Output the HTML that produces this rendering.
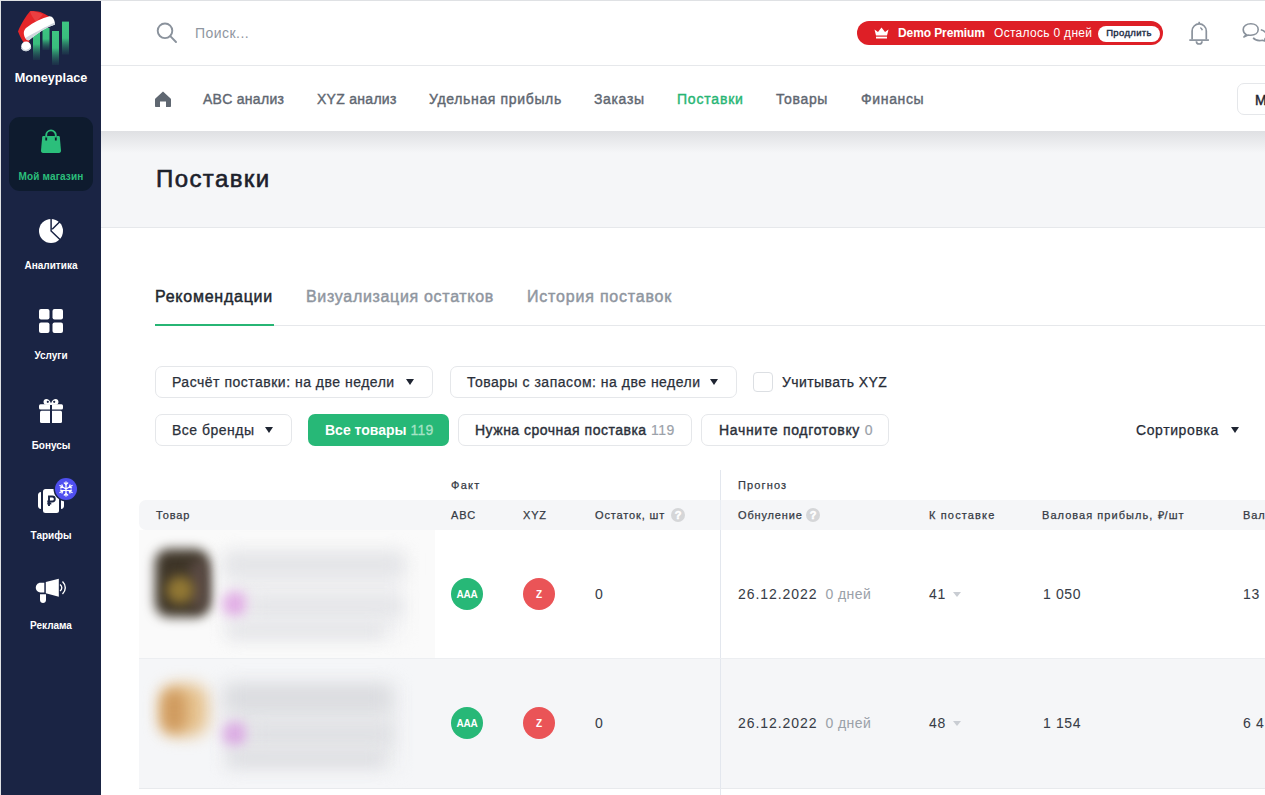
<!DOCTYPE html>
<html><head><meta charset="utf-8">
<style>
*{box-sizing:border-box;margin:0;padding:0}
html,body{width:1265px;height:795px;overflow:hidden;background:#fff;font-family:"Liberation Sans",sans-serif;color:#1f2532}
.abs{position:absolute}
#frame{position:absolute;left:0;top:0;width:1265px;height:795px;border-top:1px solid #dfe1e4;border-left:1px solid #dfe1e4}
#side{position:absolute;left:1px;top:1px;width:100px;height:794px;background:#1a2444}
.slabel{position:absolute;left:0;width:100px;text-align:center;font-size:10px;font-weight:700;color:#fff;white-space:nowrap}
#header{position:absolute;left:101px;top:1px;width:1164px;height:65px;background:#fff;border-bottom:1px solid #e6e8eb}
#nav{position:absolute;left:101px;top:66px;width:1164px;height:65px;background:#fff}
.nv{position:absolute;top:91px;font-size:14px;font-weight:400;color:#5f6771;white-space:nowrap;line-height:16px;letter-spacing:0.65px;-webkit-text-stroke:0.4px currentColor}
#titlebar{position:absolute;left:101px;top:131px;width:1164px;height:97px;background:#f5f6f8;border-bottom:1px solid #e6e8eb}
#shadow{position:absolute;left:101px;top:131px;width:1164px;height:22px;background:linear-gradient(#dfe0e3,#f5f6f8)}
.tab{position:absolute;top:288px;font-size:16px;font-weight:400;color:#8f969f;white-space:nowrap;line-height:18px;letter-spacing:0.72px;-webkit-text-stroke:0.45px currentColor}
.btn{position:absolute;height:32px;border:1px solid #e5e7ea;border-radius:7px;background:#fff;font-size:14px;color:#2b303a;white-space:nowrap;line-height:30px}
.reg{letter-spacing:0.5px;-webkit-text-stroke:0.25px currentColor}
.tri{position:absolute;width:0;height:0;border-left:4.5px solid transparent;border-right:4.5px solid transparent;border-top:6px solid #1f2532}
.cnt{color:#9ba1a9;font-weight:400}
.th{position:absolute;font-size:11px;font-weight:400;color:#353a44;letter-spacing:0.85px;white-space:nowrap;line-height:13px;-webkit-text-stroke:0.25px currentColor}
.help{position:absolute;width:14px;height:14px;border-radius:50%;background:#d5d6d8;color:#fff;font-size:11px;line-height:14.5px;text-align:center;letter-spacing:0;font-weight:700;-webkit-text-stroke:0.5px #fff}
.td{position:absolute;font-size:14px;color:#383d47;letter-spacing:0.6px;white-space:nowrap;line-height:16px;-webkit-text-stroke:0.05px currentColor}
.circ{position:absolute;width:32px;height:32px;border-radius:50%;color:#fff;font-size:10px;font-weight:700;text-align:center;line-height:33.5px;letter-spacing:-0.3px}
.blur{position:absolute;filter:blur(6px)}
</style></head><body>
<div id="frame"></div>

<!-- SIDEBAR -->
<div id="side"></div>
<!-- logo -->
<svg class="abs" style="left:14px;top:8px" width="64" height="62" viewBox="0 0 64 62">
<defs>
<linearGradient id="bg" x1="0" y1="0" x2="0" y2="1"><stop offset="0" stop-color="#3ec582"/><stop offset="0.5" stop-color="#39be7d"/><stop offset="1" stop-color="#2a6e62" stop-opacity="0.15"/></linearGradient>
</defs>
<rect x="19" y="20" width="7" height="32" fill="url(#bg)"/>
<rect x="28.5" y="20" width="7" height="22" fill="url(#bg)"/>
<rect x="38" y="23" width="7" height="34" fill="url(#bg)"/>
<rect x="48" y="13.6" width="7" height="33" fill="url(#bg)"/>
<!-- hat -->
<path d="M37 10 C31 5 23 2 16 3.3 C12 8 7 16 4 23.5 C6 29 8.5 33 11 36.5 L15.5 34 L14 21 Z" fill="#e52529"/>
<path d="M16 3.3 C20 3 25 4.5 29 6.5 L22 14 C19 10 17 7 16 3.3Z" fill="#f05a5a" opacity="0.5"/>
<path d="M12 20 C20 14 28 10 35.5 8.3 C38.5 8.2 40.8 11.5 41 16.5 C35 18.5 25 23.5 15 32.3 C12 32.5 10 29 9.8 25 C9.8 23 10.8 21 12 20 Z" fill="#fff"/>
<path d="M41 16.5 C35 18.5 25 23.5 15 32.3 C13.5 32.4 12.3 31.5 11.5 30 C20 25 32 18.5 40.8 14.5 Z" fill="#cfd6de"/>
<circle cx="12.1" cy="38.4" r="4.9" fill="#fff"/>
<path d="M7.6 40 C9 43.3 14.5 43.8 16.8 39.5" stroke="#c9d1da" stroke-width="1.3" fill="none"/>
</svg>
<div class="slabel" style="top:71px;font-size:12.7px;left:1px;width:100px">Moneyplace</div>

<!-- active item -->
<div class="abs" style="left:9px;top:117px;width:84px;height:74px;border-radius:11px;background:#0e1b2e"></div>
<svg class="abs" style="left:40px;top:128px" width="22" height="26" viewBox="0 0 22 26">
<path d="M3.5 8 H18.5 C19.3 8 19.7 8.5 19.8 9.2 L21 22.5 C21.1 23.8 20.3 25 19 25 H3 C1.7 25 0.9 23.8 1 22.5 L2.2 9.2 C2.3 8.5 2.7 8 3.5 8Z" fill="#2bbf7b"/>
<rect x="5.3" y="8" width="1.8" height="4.5" fill="#0e1b2e"/>
<rect x="14.9" y="8" width="1.8" height="4.5" fill="#0e1b2e"/>
<path d="M6.2 9.5 V7.2 A4.8 4.8 0 0 1 15.8 7.2 V9.5" stroke="#2bbf7b" stroke-width="1.9" fill="none"/>
</svg>
<div class="slabel" style="top:171px;left:1px;color:#2bbf7b;letter-spacing:0.15px">Мой магазин</div>

<!-- analytics -->
<svg class="abs" style="left:39px;top:219px" width="24" height="24" viewBox="0 0 24 24">
<circle cx="12" cy="12" r="12" fill="#fff"/>
<path d="M12.1 -1 V12 L22 21.5 M13.2 10.3 L21 2.5" stroke="#1a2444" stroke-width="1.5" fill="none"/>
</svg>
<div class="slabel" style="top:260px;left:1px">Аналитика</div>

<!-- services -->
<svg class="abs" style="left:39px;top:309px" width="24" height="24" viewBox="0 0 24 24">
<rect x="0" y="0" width="10.5" height="10.5" rx="2" fill="#fff"/>
<rect x="13.5" y="0" width="10.5" height="10.5" rx="2" fill="#fff"/>
<rect x="0" y="13.5" width="10.5" height="10.5" rx="2" fill="#fff"/>
<rect x="13.5" y="13.5" width="10.5" height="10.5" rx="2" fill="#fff"/>
</svg>
<div class="slabel" style="top:350px;left:1px">Услуги</div>

<!-- bonuses -->
<svg class="abs" style="left:39px;top:398px" width="24" height="26" viewBox="0 0 24 26">
<path d="M12 5.5 C10.5 0 4.5 -0.3 4.5 4 C4.5 5.6 5.7 6.8 7 6.8 H17 C18.3 6.8 19.5 5.6 19.5 4 C19.5 -0.3 13.5 0 12 5.5Z" fill="#fff"/>
<circle cx="8.8" cy="3.8" r="1.1" fill="#1a2444"/><circle cx="15.2" cy="3.8" r="1.1" fill="#1a2444"/>
<rect x="0" y="6.3" width="24" height="5.3" rx="1.5" fill="#fff"/>
<rect x="1" y="12.8" width="22" height="12.2" rx="1.5" fill="#fff"/>
<rect x="11" y="7" width="2" height="19" fill="#1a2444"/>
</svg>
<div class="slabel" style="top:440px;left:1px">Бонусы</div>

<!-- tariffs -->
<svg class="abs" style="left:36px;top:476px" width="44" height="40" viewBox="0 0 44 40">
<path d="M5 16 C3 16 2 17.5 2 19 V30 C2 31.5 3 33 5 33 Z" fill="#fff"/>
<path d="M25 16 C27 16 28 17.5 28 19 V30 C28 31.5 27 33 25 33 Z" fill="#fff"/>
<rect x="7" y="13" width="16" height="24" rx="2.5" fill="#fff"/>
<path d="M13 30 V20.5 H16.3 A2.5 2.5 0 0 1 16.3 25.5 H11.3 M11.3 27.6 H15.3" stroke="#1a2444" stroke-width="1.9" fill="none"/>
<circle cx="30" cy="13" r="12.5" fill="#1b2546"/>
<circle cx="30" cy="13" r="11" fill="#4f4ff0"/>
<g stroke="#fff" stroke-width="1.3" stroke-linecap="round" fill="none">
<path d="M30 6 V20 M23.9 9.5 L36.1 16.5 M23.9 16.5 L36.1 9.5"/>
<path d="M28.3 7 L30 8.5 L31.7 7 M28.3 19 L30 17.5 L31.7 19"/>
<path d="M24.5 11.8 L26.6 11.2 L26 9 M35.5 14.2 L33.4 14.8 L34 17 M24.5 14.2 L26.6 14.8 L26 17 M35.5 11.8 L33.4 11.2 L34 9"/>
</g>
</svg>
<div class="slabel" style="top:530px;left:1px">Тарифы</div>

<!-- ads -->
<svg class="abs" style="left:35px;top:578px" width="32" height="26" viewBox="0 0 32 26">
<path d="M5.5 4.7 H9.3 V14.5 H5.5 C2.8 14.5 0.8 12.3 0.8 9.6 C0.8 6.9 2.8 4.7 5.5 4.7Z" fill="#fff"/>
<path d="M10.8 4 L23.8 0.7 V18.7 L10.8 15.3 Z" fill="#fff"/>
<path d="M5 16.3 H11 V22 C11 23.7 9.7 25 8 25 C6.3 25 5 23.7 5 22Z" fill="#fff"/>
<path d="M25 6.5 C26.2 7.5 26.8 8.5 26.8 9.8 C26.8 11 26.2 12.1 25 13" stroke="#fff" stroke-width="1.4" fill="none"/>
<path d="M27.5 3.5 C29.5 5.5 30.3 7.5 30.3 9.8 C30.3 12 29.5 14 27.5 16" stroke="#fff" stroke-width="1.4" fill="none"/>
</svg>
<div class="slabel" style="top:620px;left:1px">Реклама</div>


<!-- HEADER -->
<div id="header"></div>
<svg class="abs" style="left:155px;top:21px" width="24" height="24" viewBox="0 0 24 24">
<circle cx="10" cy="9.8" r="7.3" stroke="#8a929c" stroke-width="1.9" fill="none"/>
<path d="M15.3 15.2 L21 21" stroke="#8a929c" stroke-width="1.9" stroke-linecap="round"/>
</svg>
<div class="abs" style="left:195px;top:25px;font-size:14px;color:#8f969f;line-height:16px;letter-spacing:0.45px">Поиск...</div>

<!-- premium -->
<div class="abs" style="left:857px;top:21px;width:306px;height:24px;border-radius:12px;background:#de1f26"></div>
<svg class="abs" style="left:874px;top:27px" width="15" height="12" viewBox="0 0 15 12">
<path d="M0.5 2.5 L4 5 L7.5 0.5 L11 5 L14.5 2.5 L13 8.5 H2 Z" fill="#fff"/>
<rect x="2" y="9.7" width="11" height="1.8" fill="#fff"/>
</svg>
<div class="abs" style="left:898px;top:26px;font-size:12px;font-weight:700;color:#fff;line-height:14px;letter-spacing:-0.1px;white-space:nowrap">Demo Premium</div>
<div class="abs" style="left:994px;top:26px;font-size:12px;color:#fff;line-height:14px;letter-spacing:0.3px;white-space:nowrap">Осталось 0 дней</div>
<div class="abs" style="left:1098px;top:26px;width:62px;height:16px;border-radius:8px;background:#fff;color:#222d45;font-size:9.5px;font-weight:400;-webkit-text-stroke:0.4px currentColor;letter-spacing:0.35px;text-align:center;line-height:13.5px">Продлить</div>
<svg class="abs" style="left:1187px;top:21px" width="24" height="24" viewBox="0 0 24 24">
<g stroke="#8a929c" stroke-width="1.7" fill="none">
<path d="M12.2 0.8 V2.8"/>
<path d="M5.1 18.6 V10 A7.1 7.1 0 0 1 19.3 10 V18.6"/>
<path d="M2.3 19.1 H21.9"/>
<path d="M9.4 20.2 A2.8 2.8 0 0 0 15 20.2"/>
<path d="M13.3 6.6 Q14.8 7.3 15.3 9.3" stroke-width="1.5"/>
</g>
</svg>
<svg class="abs" style="left:1240px;top:21px" width="30" height="24" viewBox="0 0 30 24">
<g stroke="#8a929c" stroke-width="1.6" fill="none" stroke-linejoin="round">
<path d="M6.3 13.6 C4.3 12.6 3.2 10.8 3.2 8.6 C3.2 5.1 6.5 2.8 10.8 2.8 C15.1 2.8 18.2 5.1 18.2 8.6 C18.2 12 15.1 14.3 10.8 14.3 C9.8 14.3 8.9 14.2 8 14 L3.8 16 Z"/>
<path d="M20.8 8.8 C24 9.6 26.5 11.8 26.5 14.6 C26.5 16.1 25.8 17.3 24.8 18.2 L25.6 20.3 L22.4 19.2 C21.5 19.5 20.5 19.6 19.5 19.6 C16.8 19.6 14.4 18.6 13.2 16.8"/>
</g>
</svg>

<div id="nav"></div>
<svg class="abs" style="left:155px;top:91px" width="16" height="16" viewBox="0 0 16 16">
<path d="M8 0.4 L15.6 7.5 C15.9 7.8 16 8.1 16 8.5 V15 C16 15.6 15.6 16 15 16 H11 V10.5 H5 V16 H1 C0.4 16 0 15.6 0 15 V8.5 C0 8.1 0.1 7.8 0.4 7.5 Z" fill="#5f6771"/>
</svg>
<div class="nv" style="left:203px;letter-spacing:0.28px">ABC анализ</div>
<div class="nv" style="left:317px;letter-spacing:0.28px">XYZ анализ</div>
<div class="nv" style="left:429px">Удельная прибыль</div>
<div class="nv" style="left:594px">Заказы</div>
<div class="nv" style="left:677px;color:#27b574;letter-spacing:0.8px">Поставки</div>
<div class="nv" style="left:776px">Товары</div>
<div class="nv" style="left:861px">Финансы</div>
<div class="abs" style="left:1237px;top:83px;width:60px;height:32px;border:1px solid #e5e7ea;border-radius:7px;background:#fff"></div>
<div class="abs" style="left:1255px;top:92px;font-size:14px;font-weight:400;color:#1f2532;line-height:16px;-webkit-text-stroke:0.45px currentColor">M</div>

<div id="titlebar"></div>
<div id="shadow"></div>
<div class="abs" style="left:156px;top:165px;font-size:24px;color:#1c212b;line-height:28px;letter-spacing:1.4px;-webkit-text-stroke:0.6px #1c212b">Поставки</div>

<!-- tabs -->
<div class="abs" style="left:155px;top:325px;width:1110px;height:1px;background:#e6e8eb"></div>
<div class="abs" style="left:155px;top:324px;width:119px;height:2px;background:#27b574"></div>
<div class="tab" style="left:155px;color:#22272f;letter-spacing:0.75px">Рекомендации</div>
<div class="tab" style="left:306px;letter-spacing:0.68px">Визуализация остатков</div>
<div class="tab" style="left:527px;letter-spacing:0.8px">История поставок</div>

<!-- filters row1 -->
<div class="btn reg" style="left:155px;top:366px;width:278px;padding-left:16px">Расчёт поставки: на две недели</div>
<div class="tri" style="left:405.5px;top:379px"></div>
<div class="btn reg" style="left:450px;top:366px;width:287px;padding-left:16px">Товары с запасом: на две недели</div>
<div class="tri" style="left:709.5px;top:379px"></div>
<div class="abs" style="left:753px;top:372px;width:20px;height:20px;border:1px solid #dcdfe3;border-radius:4px;background:#fff"></div>
<div class="abs reg" style="left:782px;top:374px;font-size:14px;color:#262b36;line-height:16px;letter-spacing:0.4px;white-space:nowrap;-webkit-text-stroke:0.25px currentColor">Учитывать XYZ</div>

<!-- filters row2 -->
<div class="btn reg" style="left:155px;top:414px;width:137px;padding-left:16px">Все бренды</div>
<div class="tri" style="left:264.5px;top:427px"></div>
<div class="abs" style="left:308px;top:414px;width:141px;height:32px;border-radius:7px;background:#27b877;font-size:14px;line-height:32px;padding-left:17px;white-space:nowrap;color:#fff;font-weight:700">Все товары <span style="font-weight:400;color:#a6e3c5;-webkit-text-stroke:0.3px currentColor;letter-spacing:0.3px">119</span></div>
<div class="btn" style="left:458px;top:414px;width:234px;padding-left:16px;-webkit-text-stroke:0.4px currentColor;letter-spacing:0.5px">Нужна срочная поставка <span class="cnt" style="-webkit-text-stroke:0.2px currentColor">119</span></div>
<div class="btn" style="left:701px;top:414px;width:188px;padding-left:17px;-webkit-text-stroke:0.4px currentColor;letter-spacing:0.69px">Начните подготовку <span class="cnt" style="-webkit-text-stroke:0.2px currentColor">0</span></div>
<div class="abs" style="left:1136px;top:422px;font-size:14px;color:#262b36;line-height:16px;letter-spacing:0.6px;white-space:nowrap;-webkit-text-stroke:0.25px currentColor">Сортировка</div>
<div class="tri" style="left:1230.5px;top:427px"></div>

<!-- table -->
<div class="abs" style="left:720px;top:470px;width:1px;height:325px;background:#e3e7ee"></div>
<div class="th" style="left:451px;top:479px;letter-spacing:1.3px">Факт</div>
<div class="th" style="left:738px;top:479px;letter-spacing:1.15px">Прогноз</div>
<div class="abs" style="left:139px;top:500px;width:1126px;height:30px;background:#f5f6f8;border-radius:7px 0 0 7px"></div>
<div class="abs" style="left:720px;top:500px;width:1px;height:30px;background:#e9edf3"></div>
<div class="th" style="left:156px;top:509px">Товар</div>
<div class="th" style="left:451px;top:509px;letter-spacing:0.85px">ABC</div>
<div class="th" style="left:523px;top:509px;letter-spacing:0.8px">XYZ</div>
<div class="th" style="left:595px;top:509px">Остаток, шт</div><div class="help" style="left:671px;top:508px">?</div>
<div class="th" style="left:738px;top:509px">Обнуление</div><div class="help" style="left:806px;top:508px">?</div>
<div class="th" style="left:929px;top:509px;letter-spacing:1.15px">К поставке</div>
<div class="th" style="left:1042px;top:509px;letter-spacing:1.05px">Валовая прибыль, ₽/шт</div>
<div class="th" style="left:1243px;top:509px">Валовая</div>

<!-- row 1 -->
<div class="abs" style="left:139px;top:658px;width:1126px;height:1px;background:#eceef1"></div>
<div class="abs" style="left:139px;top:530px;width:296px;height:128px;background:#fafafa"></div>
<div class="blur" style="left:226px;top:556px;width:176px;height:80px;background:#f0f0f2;filter:blur(10px)"></div>
<div class="blur" style="left:155px;top:549px;width:54px;height:68px;border-radius:14px;background:#3e3528;filter:blur(6px)"></div>
<div class="blur" style="left:190px;top:560px;width:18px;height:50px;border-radius:8px;background:#5a4a44;filter:blur(6px)"></div>
<div class="blur" style="left:166px;top:576px;width:28px;height:28px;border-radius:50%;background:#927834;filter:blur(6px)"></div>
<div class="blur" style="left:224px;top:553px;width:180px;height:22px;background:#e2e3e6;filter:blur(9px)"></div>
<div class="blur" style="left:222px;top:591px;width:26px;height:26px;border-radius:50%;background:#e2b0e6;filter:blur(6px)"></div>
<div class="blur" style="left:252px;top:598px;width:150px;height:16px;background:#e3e4e7;filter:blur(8px)"></div>
<div class="blur" style="left:228px;top:624px;width:155px;height:14px;background:#e2e3e6;filter:blur(8px)"></div>
<div class="circ" style="left:451px;top:578px;background:#27b877">AAA</div>
<div class="circ" style="left:523px;top:578px;background:#ea5457">Z</div>
<div class="td" style="left:595px;top:586px">0</div>
<div class="td" style="left:738px;top:586px"><span style="letter-spacing:0.95px">26.12.2022</span><span style="color:#9ba1a9;letter-spacing:0.4px;margin-left:8px">0 дней</span></div>
<div class="td" style="left:929px;top:586px">41</div>
<div class="tri" style="left:952.5px;top:592px;border-top-color:#c9cdd3;border-left-width:4px;border-right-width:4px;border-top-width:5.5px"></div>
<div class="td" style="left:1043px;top:586px">1 050</div>
<div class="td" style="left:1243px;top:586px">13</div>

<!-- row 2 -->
<div class="abs" style="left:139px;top:659px;width:1126px;height:129px;background:#f5f6f8"></div>
<div class="abs" style="left:720px;top:659px;width:1px;height:129px;background:#e3e7ee"></div>
<div class="abs" style="left:139px;top:788px;width:1126px;height:1px;background:#e8eaed"></div>
<div class="blur" style="left:226px;top:686px;width:170px;height:80px;background:#e9eaec;filter:blur(10px)"></div>
<div class="blur" style="left:160px;top:684px;width:48px;height:52px;border-radius:16px;background:#e6c28e;filter:blur(8px)"></div>
<div class="blur" style="left:162px;top:690px;width:24px;height:42px;border-radius:10px;background:#cf9a5e;filter:blur(7px)"></div>
<div class="blur" style="left:225px;top:685px;width:165px;height:26px;background:#dadbdf;filter:blur(9px)"></div>
<div class="blur" style="left:222px;top:721px;width:26px;height:26px;border-radius:50%;background:#dcaee4;filter:blur(6px)"></div>
<div class="blur" style="left:252px;top:726px;width:140px;height:16px;background:#dedfe3;filter:blur(8px)"></div>
<div class="blur" style="left:228px;top:752px;width:155px;height:14px;background:#dcdde1;filter:blur(8px)"></div>
<div class="circ" style="left:451px;top:707px;background:#27b877">AAA</div>
<div class="circ" style="left:523px;top:707px;background:#ea5457">Z</div>
<div class="td" style="left:595px;top:715px">0</div>
<div class="td" style="left:738px;top:715px"><span style="letter-spacing:0.95px">26.12.2022</span><span style="color:#9ba1a9;letter-spacing:0.4px;margin-left:8px">0 дней</span></div>
<div class="td" style="left:929px;top:715px">48</div>
<div class="tri" style="left:952.5px;top:721px;border-top-color:#c9cdd3;border-left-width:4px;border-right-width:4px;border-top-width:5.5px"></div>
<div class="td" style="left:1043px;top:715px">1 154</div>
<div class="td" style="left:1243px;top:715px">6 4</div>

</body></html>
